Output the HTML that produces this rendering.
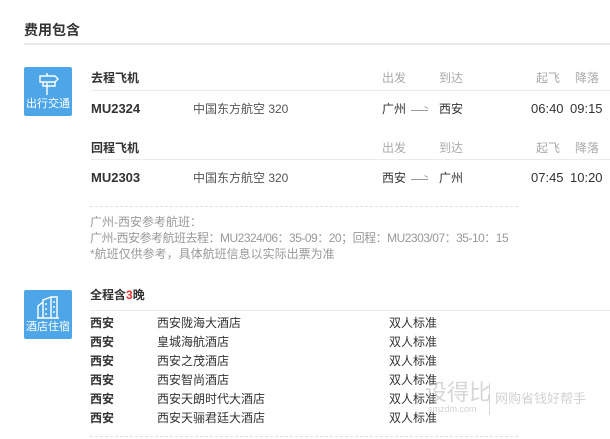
<!DOCTYPE html>
<html><head><meta charset="utf-8"><style>
*{margin:0;padding:0;box-sizing:border-box}
body{width:610px;height:439px;background:#fff;font-family:"Liberation Sans","Noto Sans CJK SC",sans-serif;color:#333;position:relative;overflow:hidden;font-size:12px}
.a{position:absolute;white-space:nowrap;line-height:14px}
.b{font-weight:bold}
.g{color:#aaa}
.t{color:#999}
.m{font-size:13px}
.hl{position:absolute;height:1px;background:#e8ebef}
.ic{position:absolute;width:48px;height:49px;background:#4ea6e8;border-radius:2px}
.ic span{position:absolute;left:0;right:0;top:31px;text-align:center;color:#fff;font-size:11px;line-height:12px}
.ic svg{position:absolute;left:12px;top:4px}
.dl{position:absolute;border-top:1px dashed #e2e2e2;height:0}
.ar{position:absolute;height:1px;width:17px;background:#999}
.ar:after{content:"";position:absolute;right:0;top:-2px;width:4px;height:1px;background:#999;transform:rotate(30deg);transform-origin:right}
</style></head><body>
<div class="a b" style="left:24px;top:22px;font-size:14px;line-height:16px">费用包含</div>
<div class="hl" style="left:24px;top:43px;width:586px;height:2px;background:#e6eaef"></div>

<div class="ic" style="left:24px;top:67px"><svg width="24" height="26" viewBox="0 0 24 26" fill="none" stroke="#fff" stroke-width="1.4"><path d="M11 2v3M11 12v12M4 5h15l3 3-3 3H4zM7 11v4h12v-4"/></svg><span>出行交通</span></div>

<div class="a b" style="left:91px;top:71px">去程飞机</div>
<div class="a g" style="left:382px;top:71px">出发</div><div class="a g" style="left:439px;top:71px">到达</div>
<div class="a g" style="left:536px;top:71px">起飞</div><div class="a g" style="left:575px;top:71px">降落</div>
<div class="hl" style="left:91px;top:90px;width:519px"></div>
<div class="a b m" style="left:91px;top:102px">MU2324</div>
<div class="a" style="left:193px;top:102px;color:#555">中国东方航空 320</div>
<div class="a" style="left:382px;top:102px">广州</div>
<div class="ar" style="left:411px;top:110px"></div>
<div class="a" style="left:439px;top:102px">西安</div>
<div class="a m" style="left:531px;top:102px">06:40</div><div class="a m" style="left:570px;top:102px">09:15</div>

<div class="a b" style="left:91px;top:141px">回程飞机</div>
<div class="a g" style="left:382px;top:141px">出发</div><div class="a g" style="left:439px;top:141px">到达</div>
<div class="a g" style="left:536px;top:141px">起飞</div><div class="a g" style="left:575px;top:141px">降落</div>
<div class="hl" style="left:91px;top:159px;width:519px"></div>
<div class="a b m" style="left:91px;top:171px">MU2303</div>
<div class="a" style="left:193px;top:171px;color:#555">中国东方航空 320</div>
<div class="a" style="left:382px;top:171px">西安</div>
<div class="ar" style="left:411px;top:179px"></div>
<div class="a" style="left:439px;top:171px">广州</div>
<div class="a m" style="left:531px;top:171px">07:45</div><div class="a m" style="left:570px;top:171px">10:20</div>

<div class="dl" style="left:90px;top:206px;width:428px"></div>
<div class="a t" style="left:90px;top:215px">广州-西安参考航班：</div>
<div class="a t" style="left:90px;top:231px;letter-spacing:-0.5px">广州-西安参考航班去程：MU2324/06：35-09：20；回程：MU2303/07：35-10：15</div>
<div class="a t" style="left:90px;top:247px">*航班仅供参考，具体航班信息以实际出票为准</div>

<div class="ic" style="left:24px;top:290px"><svg width="24" height="26" viewBox="0 0 24 26" fill="none" stroke="#fff" stroke-width="1.4"><path d="M2 24V12l5-4v16M7 24V6l8-3v21M15 24V3h6v21M10 9v2M10 14v2M10 19v2M18 7v2M18 12v2M18 17v2M1 24h22"/></svg><span>酒店住宿</span></div>
<div class="a b" style="left:90px;top:288px">全程含<span style="color:#e33">3</span>晚</div>
<div class="hl" style="left:90px;top:310px;width:520px"></div>
<div class="a b" style="left:90px;top:316px">西安</div><div class="a" style="left:157px;top:316px">西安陇海大酒店</div><div class="a" style="left:389px;top:316px">双人标准</div>
<div class="a b" style="left:90px;top:335px">西安</div><div class="a" style="left:157px;top:335px">皇城海航酒店</div><div class="a" style="left:389px;top:335px">双人标准</div>
<div class="a b" style="left:90px;top:354px">西安</div><div class="a" style="left:157px;top:354px">西安之茂酒店</div><div class="a" style="left:389px;top:354px">双人标准</div>
<div class="a b" style="left:90px;top:373px">西安</div><div class="a" style="left:157px;top:373px">西安智尚酒店</div><div class="a" style="left:389px;top:373px">双人标准</div>
<div class="a b" style="left:90px;top:392px">西安</div><div class="a" style="left:157px;top:392px">西安天朗时代大酒店</div><div class="a" style="left:389px;top:392px">双人标准</div>
<div class="a b" style="left:90px;top:411px">西安</div><div class="a" style="left:157px;top:411px">西安天骊君廷大酒店</div><div class="a" style="left:389px;top:411px">双人标准</div>
<div class="dl" style="left:90px;top:436px;width:428px"></div>

<div class="a" style="left:425px;top:381px;font-size:22px;line-height:24px;color:rgba(180,180,180,.55)">设得比</div>
<div class="a" style="left:428px;top:404px;font-size:9px;line-height:10px;color:rgba(180,180,180,.6)">smzdm.com</div>
<div style="position:absolute;left:489px;top:383px;width:1px;height:32px;background:rgba(190,190,190,.6)"></div>
<div class="a" style="left:495px;top:392px;font-size:13px;color:rgba(180,180,180,.6)">网购省钱好帮手</div>
</body></html>
